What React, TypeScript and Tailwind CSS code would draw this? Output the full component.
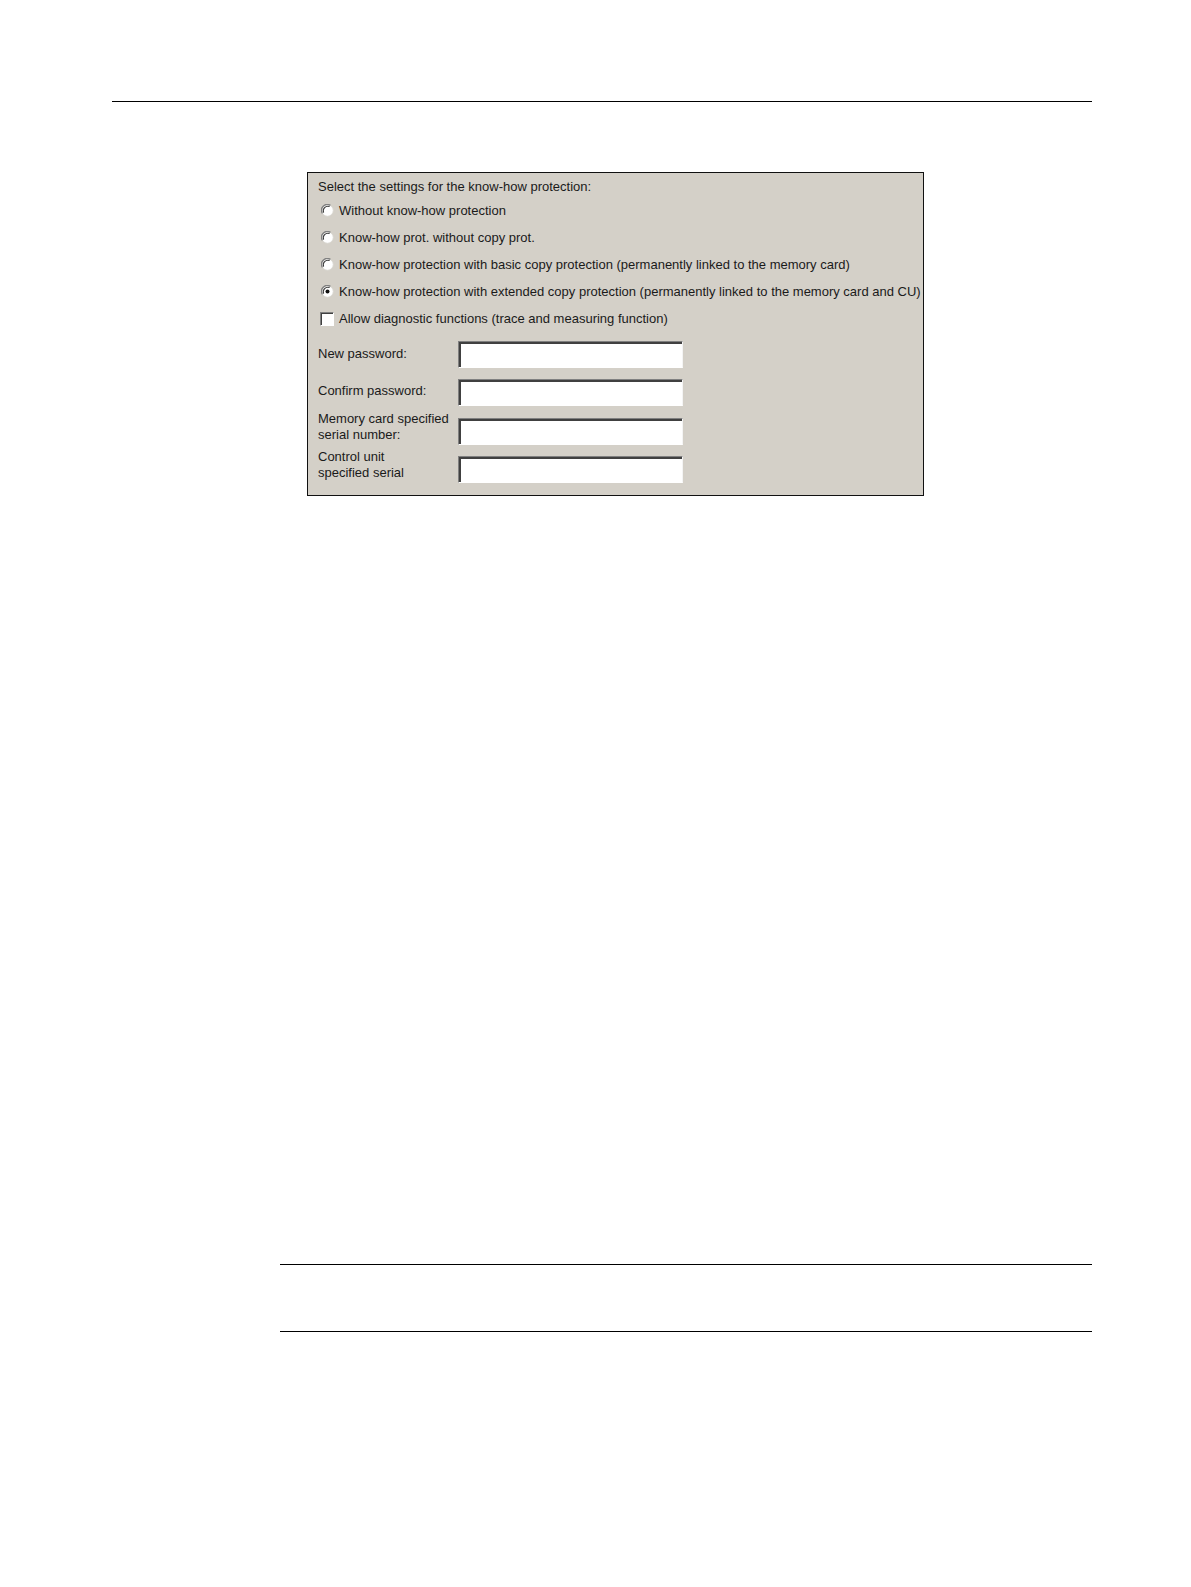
import React from 'react';

const font = { fontFamily: '"Liberation Sans", Arial, sans-serif' };

function Radio({ checked }: { checked?: boolean }) {
  return (
    <svg width="13" height="13" viewBox="0 0 13 13" className="shrink-0">
      <circle cx="6.5" cy="6.5" r="5.8" fill="#ffffff" stroke="#d8d6d0" strokeWidth="1" />
      <path d="M1.4 9.4 A5.8 5.8 0 0 1 9.4 1.4" fill="none" stroke="#808080" strokeWidth="1.3" />
      <path d="M2.6 8.6 A4.6 4.6 0 0 1 8.6 2.6" fill="none" stroke="#3a3a3a" strokeWidth="1.1" />
      {checked && <circle cx="6.5" cy="6.5" r="2" fill="#111" />}
    </svg>
  );
}

function Checkbox() {
  return (
    <span className="block h-[14px] w-[14px] shrink-0 border border-t-[#808080] border-l-[#808080] border-b-white border-r-white bg-white shadow-[inset_1px_1px_0_#404040]" />
  );
}

function Field() {
  return (
    <div className="h-[27px] w-[225px] shrink-0 border border-t-[#808080] border-l-[#808080] border-b-white border-r-[#f4f4f4] bg-white shadow-[inset_2px_2px_0_#404040]" />
  );
}

const options = [
  'Without know-how protection',
  'Know-how prot. without copy prot.',
  'Know-how protection with basic copy protection (permanently linked to the memory card)',
  'Know-how protection with extended copy protection (permanently linked to the memory card and CU)',
];

export default function App() {
  return (
    <div className="bg-white" style={font}>
      <div className="pt-[101px]">
        <div className="ml-[112px] h-px w-[980px] bg-black" />
      </div>

      <div className="ml-[307px] mt-[70px] h-[324px] w-[617px] overflow-hidden border border-[#111] bg-[#d4d0c8] text-[13px] leading-[15px] text-[#1a1a1a]">
        <div className="pl-[10px] pt-[6px]">Select the settings for the know-how protection:</div>
        <div className="mt-[3px] flex flex-col">
          {options.map((o, i) => (
            <div key={o} className="flex h-[27px] items-center gap-[5px] pl-[13px] whitespace-nowrap">
              <Radio checked={i === 3} />
              <span>{o}</span>
            </div>
          ))}
          <div className="flex h-[27px] items-center gap-[5px] pl-[12px] whitespace-nowrap">
            <Checkbox />
            <span>Allow diagnostic functions (trace and measuring function)</span>
          </div>
        </div>

        <div className="mt-[9px] flex flex-col pl-[10px] leading-[16px]">
          <div className="flex h-[27px] items-start">
            <div className="mt-[5px] w-[140px]">New password:</div>
            <Field />
          </div>
          <div className="mt-[11px] flex h-[27px] items-start">
            <div className="mt-[4px] w-[140px]">Confirm password:</div>
            <Field />
          </div>
          <div className="mt-[12px] flex h-[27px] items-start">
            <div className="-mt-[7px] w-[140px]">
              Memory card specified
              <br />
              serial number:
            </div>
            <Field />
          </div>
          <div className="mt-[11px] flex h-[27px] items-start">
            <div className="-mt-[7px] h-[35px] w-[140px] overflow-hidden">
              Control unit
              <br />
              specified serial
              <br />
              number:
            </div>
            <Field />
          </div>
        </div>
      </div>

      <div className="ml-[280px] mt-[768px] h-px w-[812px] bg-black" />
      <div className="ml-[280px] mt-[66px] h-px w-[812px] bg-black" />
    </div>
  );
}
